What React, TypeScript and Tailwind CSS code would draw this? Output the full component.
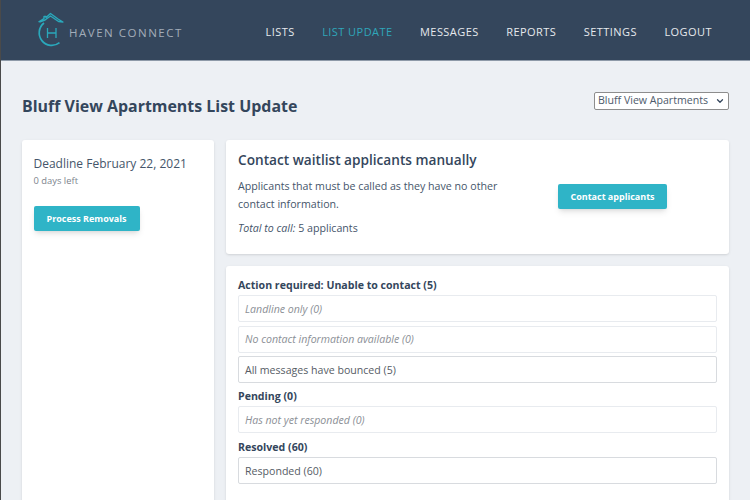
import { ChevronDown } from "lucide-react";

const navItems = ["LISTS", "LIST UPDATE", "MESSAGES", "REPORTS", "SETTINGS", "LOGOUT"];

function Logo() {
  return (
    <div className="flex items-center">
      <svg width="30" height="40" viewBox="0 0 30 40" fill="none" className="text-[#2aa8bb]">
        <path d="M8 13 A12.5 12.5 0 1 0 23.5 32.7" stroke="currentColor" strokeWidth="1.7" />
        <path d="M2.5 12 L8 8.5 V6.5 H10 V7.5 L14.5 3.5 L22 9 L27 12 L22.5 11.5 L14.5 6 L9 10 L3.5 12" stroke="currentColor" strokeWidth="1.4" strokeLinejoin="round" />
        <path d="M11.5 18 V28 M20 18 V28 M11.5 23 H20" stroke="currentColor" strokeWidth="1.3" />
      </svg>
      <span className="ml-[3px] mt-[6px] text-[11.5px] tracking-[0.132em] text-[#a3adb9]">HAVEN CONNECT</span>
    </div>
  );
}

function ListRow({ label, muted }: { label: string; muted?: boolean }) {
  return (
    <div
      className={
        muted
          ? "flex h-[27px] items-center rounded-[2px] border border-[#e8ebef] px-[6px] pt-[2px] text-[10.6px] italic text-[#8b8f96]"
          : "flex h-[27px] items-center rounded-[2px] border border-[#d8dbdf] px-[6px] pt-[2px] text-[10.6px] text-[#565c65]"
      }
    >
      {label}
    </div>
  );
}

function Heading({ children }: { children: string }) {
  return <div className="text-[10.6px] font-bold leading-[14px] text-[#34465c]">{children}</div>;
}

export default function App() {
  return (
    <div className="h-[500px] w-[750px] overflow-hidden border-l border-[#4a4a4a] bg-[#edf0f4] font-['Open_Sans',sans-serif]">
      <header className="flex h-[61px] items-center justify-between border-b border-[#8e9aa8] bg-[#34465c] pl-[35px] pr-[38px]">
        <Logo />
        <nav className="mt-[4px] flex gap-[27.5px] text-[11px] font-medium tracking-[0.04em] text-[#e6e9ed]">
          {navItems.map((item) => (
            <span key={item} className={item === "LIST UPDATE" ? "font-normal text-[#2fa7ba]" : ""}>
              {item}
            </span>
          ))}
        </nav>
      </header>

      <main className="pl-[21px] pr-[21px]">
        <div className="flex h-[79px] items-start justify-between pt-[31px]">
          <h1 className="mt-[2px] text-[15.95px] font-bold leading-[24px] text-[#34465c]">Bluff View Apartments List Update</h1>
          <div className="relative h-[18px] w-[135px]">
            <select className="block h-[18px] w-full appearance-none rounded-[2px] border border-[#8d8d8d] bg-white pl-[3px] text-[10.6px] text-[#4d5a6b]">
              <option>Bluff View Apartments</option>
            </select>
            <ChevronDown size={10} strokeWidth={3} className="absolute right-[4px] top-[4px] text-[#34465c]" />
          </div>
        </div>

        <div className="flex gap-[12px]">
          <aside className="h-[380px] w-[192px] shrink-0 rounded-[3px] bg-white pl-[11.5px] pr-[12px] pt-[15px] shadow-sm">
            <div className="text-[12px] leading-[18px] text-[#45556a]">Deadline February 22, 2021</div>
            <div className="mt-[1px] text-[9.4px] leading-[13px] text-[#7d848d]">0 days left</div>
            <button className="mt-[19px] flex h-[25px] w-[106px] items-center justify-center rounded-[2px] bg-[#2fb4c7] text-[9px] font-bold text-white shadow-md">
              Process Removals
            </button>
          </aside>

          <div className="flex flex-1 flex-col gap-[12px]">
            <section className="h-[114px] rounded-[3px] bg-white pl-[12px] pt-[10px] shadow-sm">
              <h2 className="text-[13.65px] font-semibold leading-[19px] text-[#34465c]">Contact waitlist applicants manually</h2>
              <div className="flex">
                <div className="w-[320px]">
                  <p className="mt-[9px] w-[280px] text-[10.65px] leading-[17.5px] text-[#45556a]">
                    Applicants that must be called as they have no other contact information.
                  </p>
                  <p className="mt-[7px] text-[10.65px] leading-[17px] text-[#45556a]">
                    <em>Total to call:</em> 5 applicants
                  </p>
                </div>
                <button className="mt-[15px] flex h-[25px] w-[109px] items-center justify-center rounded-[2px] bg-[#2fb4c7] text-[9px] font-bold text-white shadow-md">
                  Contact applicants
                </button>
              </div>
            </section>

            <section className="flex h-[240px] flex-col rounded-[3px] bg-white px-[12px] pt-[12px] shadow-sm">
              <Heading>Action required: Unable to contact (5)</Heading>
              <div className="mt-[3px] flex flex-col gap-[3.5px]">
                <ListRow label="Landline only (0)" muted />
                <ListRow label="No contact information available (0)" muted />
                <ListRow label="All messages have bounced (5)" />
              </div>
              <div className="mt-[6px]">
                <Heading>Pending (0)</Heading>
              </div>
              <div className="mt-[3px]">
                <ListRow label="Has not yet responded (0)" muted />
              </div>
              <div className="mt-[7px]">
                <Heading>Resolved (60)</Heading>
              </div>
              <div className="mt-[3px]">
                <ListRow label="Responded (60)" />
              </div>
            </section>
          </div>
        </div>
      </main>
    </div>
  );
}
